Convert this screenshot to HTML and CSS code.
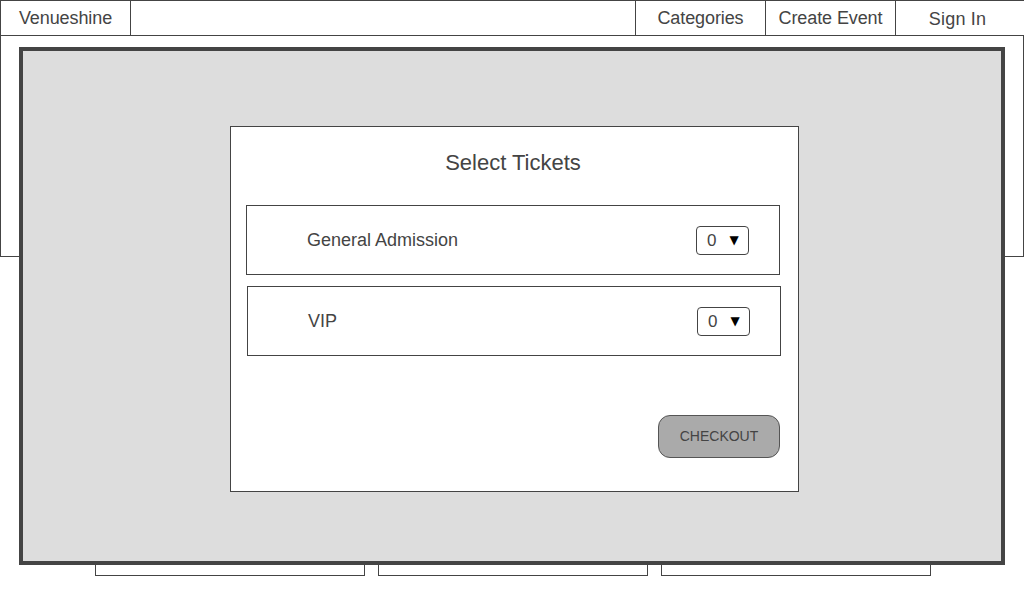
FILE: index.html
```html
<!DOCTYPE html>
<html>
<head>
<meta charset="utf-8">
<title>Venueshine</title>
<link rel="stylesheet" href="styles.css">
</head>
<body>
<div class="page">
  <header class="topbar">
    <div class="cell brand">Venueshine</div>
    <div class="cell search"></div>
    <div class="cell nav">Categories</div>
    <div class="cell nav">Create Event</div>
    <div class="cell nav signin">Sign In</div>
  </header>
  <section class="hero"></section>
  <section class="cards">
    <div class="card"></div>
    <div class="card"></div>
    <div class="card"></div>
  </section>

  <div class="overlay">
    <div class="modal">
      <h1 class="modal-title">Select Tickets</h1>
      <div class="ticket">
        <span class="ticket-name">General Admission</span>
        <div class="qty"><span class="qty-val">0</span><span class="qty-arrow">▼</span></div>
      </div>
      <div class="ticket ticket-second">
        <span class="ticket-name">VIP</span>
        <div class="qty"><span class="qty-val">0</span><span class="qty-arrow">▼</span></div>
      </div>
      <div class="actions">
        <button class="checkout">CHECKOUT</button>
      </div>
    </div>
  </div>
</div>
</body>
</html>
```

FILE: styles.css
```css
html, body {
  margin: 0;
  padding: 0;
  background: #ffffff;
}
body {
  font-family: "Liberation Sans", Arial, sans-serif;
  color: #444444;
  width: 1024px;
  height: 600px;
  overflow: hidden;
}
.page {
  position: relative;
  width: 1024px;
  height: 600px;
}
.topbar {
  display: flex;
  height: 34px;
  border-top: 1px solid #444;
  border-bottom: 1px solid #444;
  border-left: 1px solid #444;
  box-sizing: content-box;
  width: 1023px;
}
.cell {
  display: flex;
  align-items: center;
  justify-content: center;
  font-size: 18px;
  letter-spacing: -0.1px;
  border-right: 1px solid #444;
  box-sizing: border-box;
}
.brand { width: 130px; }
.search { width: 505px; }
.nav { width: 130px; }
.signin {
  flex: 1;
  border-right: none;
  padding-right: 5px;
  padding-top: 2px;
  letter-spacing: 0.2px;
}
.hero {
  height: 220px;
  border-left: 1px solid #444;
  border-right: 1px solid #444;
  border-bottom: 1px solid #444;
}
.cards {
  display: flex;
  gap: 13px;
  padding-left: 95px;
  margin-top: 14px;
}
.card {
  width: 270px;
  height: 305px;
  box-sizing: border-box;
  border: 1px solid #444;
}
.overlay {
  position: absolute;
  left: 19px;
  top: 47px;
  width: 986px;
  height: 518px;
  box-sizing: border-box;
  border: 4px solid #444;
  background: #dddddd;
}
.modal {
  margin-left: 207px;
  margin-top: 75px;
  width: 569px;
  height: 366px;
  box-sizing: border-box;
  border: 1px solid #444;
  background: #ffffff;
  padding: 23px 18px 0 15px;
  display: flex;
  flex-direction: column;
}
.modal-title {
  margin: 0 0 29px 0;
  font-size: 22px;
  font-weight: normal;
  line-height: 26px;
  text-align: center;
}
.ticket {
  height: 70px;
  box-sizing: border-box;
  border: 1px solid #444;
  display: flex;
  align-items: center;
  justify-content: space-between;
  padding: 0 30px 0 60px;
}
.ticket-second {
  margin-top: 11px;
  margin-left: 1px;
  margin-right: -1px;
}
.ticket-name {
  font-size: 18px;
}
.qty {
  width: 53px;
  height: 29px;
  box-sizing: border-box;
  border: 1px solid #444;
  border-radius: 4px;
  display: flex;
  align-items: center;
  padding-left: 10px;
  gap: 13px;
}
.qty-val {
  font-size: 17px;
  line-height: 20px;
  padding-top: 1px;
}
.qty-arrow {
  font-size: 12px;
  line-height: 14px;
  color: #000;
  font-family: "DejaVu Sans", sans-serif;
}
.actions {
  display: flex;
  justify-content: flex-end;
  margin-top: 59px;
}
.checkout {
  width: 122px;
  height: 43px;
  box-sizing: border-box;
  border: 1px solid #555;
  border-radius: 12px;
  background: #aaaaaa;
  color: #444;
  font-family: "Liberation Sans", Arial, sans-serif;
  font-size: 14px;
  padding: 0 0 2px 0;
}
```
